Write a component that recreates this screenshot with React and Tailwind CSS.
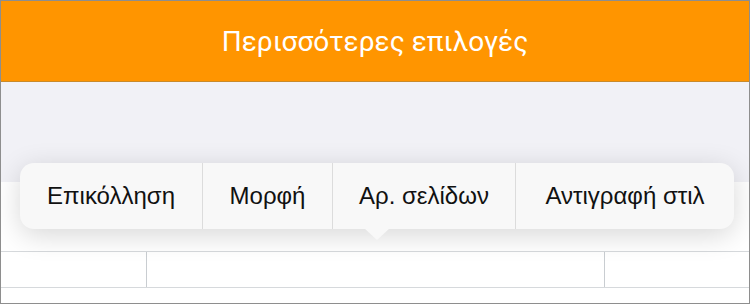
export default function App() {
  const items = [
    { label: "Επικόλληση", w: "w-[182px]" },
    { label: "Μορφή", w: "w-[130px]" },
    { label: "Αρ. σελίδων", w: "w-[183px]" },
    { label: "Αντιγραφή στιλ", w: "w-[219px]" },
  ];

  return (
    <div className="relative h-[304px] w-[750px] overflow-hidden border border-[#8e8e8e] bg-white">
      <header className="flex h-[81px] items-center justify-center border-b border-[#c98a2a] bg-[#ff9500]">
        <h1
          className="pt-[2px] text-[28px] text-white"
          style={{ fontFamily: "Roboto, 'Noto Sans', sans-serif" }}
        >
          Περισσότερες επιλογές
        </h1>
      </header>

      <div className="h-[100px] bg-[#f1f1f6]" />

      <div className="mt-[69px] flex h-[37px] border-y border-[#d6d9dc]">
        <div className="w-[146px] border-r border-[#c9cdd1]" />
        <div className="w-[458px] border-r border-[#c9cdd1]" />
        <div className="flex-1" />
      </div>

      <div
        className="absolute left-[19px] top-[162px] flex h-[66px] rounded-[14px] bg-[#f8f8f8] shadow-[0_6px_28px_rgba(0,0,0,0.16)]"
        style={{ fontFamily: "'Liberation Sans', Arial, sans-serif" }}
      >
        {items.map((item, i) => (
          <div
            key={item.label}
            className={`flex items-center justify-center text-[24px] text-[#111] ${item.w} ${
              i > 0 ? "border-l border-[#dcdcdc]" : ""
            }`}
          >
            {item.label}
          </div>
        ))}
        <div className="absolute left-[344px] top-[65px] h-0 w-0 border-x-[13px] border-t-[12px] border-x-transparent border-t-[#f8f8f8]" />
      </div>
    </div>
  );
}
